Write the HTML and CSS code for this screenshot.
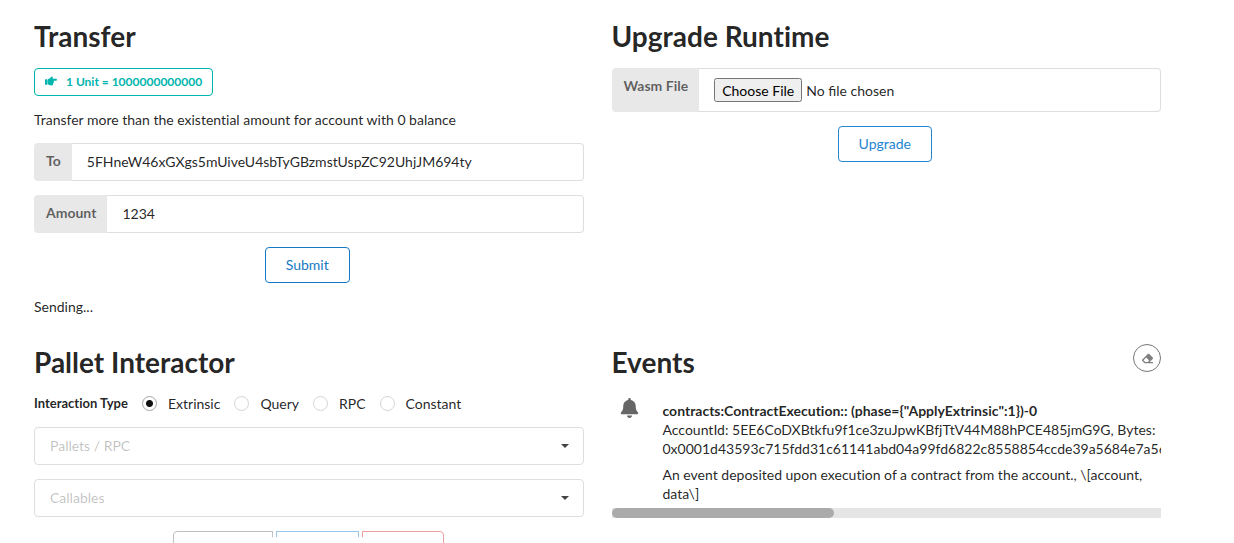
FILE: index.html
```html
<!DOCTYPE html>
<html lang="en">
<head>
<meta charset="utf-8">
<title>Substrate Front End</title>
<link rel="stylesheet" href="styles.css">
</head>
<body>
<main class="container">
  <div class="grid">
    <section class="column">
      <h1>Transfer</h1>
      <div class="tag">
        <svg class="tag-icon" viewBox="0 0 512 512" aria-hidden="true"><path fill="currentColor" d="M512 199.652c0 23.625-20.65 43.826-44.8 43.826h-99.851c16.34 17.048 18.346 49.766-6.299 70.944 14.288 22.829 2.147 53.017-16.45 62.315C353.574 425.878 322.654 448 272 448c-2.746 0-13.276-.203-16-.195-61.971.168-76.894-31.065-123.731-38.315C120.596 407.683 112 397.599 112 385.786V214.261l.002-.001c.011-18.366 10.607-35.889 28.464-43.845 28.886-12.994 95.413-49.038 107.534-77.323 7.797-18.194 21.384-29.084 40-29.092 34.222-.014 57.752 35.098 44.119 66.908-3.583 8.359-8.312 16.67-14.153 24.918H467.2c23.45 0 44.8 20.543 44.8 43.826zM96 200v192c0 13.255-10.745 24-24 24H24c-13.255 0-24-10.745-24-24V200c0-13.255 10.745-24 24-24h48c13.255 0 24 10.745 24 24z"/></svg>
        <span>1 Unit = 1000000000000</span>
      </div>
      <p>Transfer more than the existential amount for account with 0 balance</p>
      <div class="field">
        <label for="to">To</label>
        <input id="to" type="text" value="5FHneW46xGXgs5mUiveU4sbTyGBzmstUspZC92UhjJM694ty">
      </div>
      <div class="field">
        <label for="amount">Amount</label>
        <input id="amount" type="text" value="1234">
      </div>
      <div class="actions"><button class="button submit" type="button">Submit</button></div>
      <p>Sending...</p>
    </section>

    <section class="column">
      <h1>Upgrade Runtime</h1>
      <div class="field">
        <label for="wasm">Wasm File</label>
        <input id="wasm" type="file">
      </div>
      <div class="actions"><button class="button" type="button">Upgrade</button></div>
    </section>

    <section class="column">
      <h1>Pallet Interactor</h1>
      <div class="radios" role="radiogroup" aria-labelledby="interaction-type">
        <span class="radios-title" id="interaction-type">Interaction Type</span>
        <label class="radio"><input type="radio" name="type" checked>Extrinsic</label>
        <label class="radio"><input type="radio" name="type">Query</label>
        <label class="radio"><input type="radio" name="type">RPC</label>
        <label class="radio"><input type="radio" name="type">Constant</label>
      </div>
      <div class="dropdown">
        <select aria-label="Pallets / RPC"><option>Pallets / RPC</option></select>
        <svg class="caret" viewBox="0 0 8 4" aria-hidden="true"><path d="M0 0h8L4 4z"/></svg>
      </div>
      <div class="dropdown">
        <select aria-label="Callables"><option>Callables</option></select>
        <svg class="caret" viewBox="0 0 8 4" aria-hidden="true"><path d="M0 0h8L4 4z"/></svg>
      </div>
      <div class="choices">
        <button class="button choice unsigned" type="button" disabled>Unsigned</button>
        <span class="or"><span class="or-text">or</span></span>
        <button class="button choice signed" type="button" disabled>Signed</button>
        <span class="or"><span class="or-text">or</span></span>
        <button class="button choice sudo" type="button" disabled>SUDO</button>
      </div>
    </section>

    <section class="column">
      <div class="events-head">
        <h1>Events</h1>
        <button class="clear" type="button" aria-label="Clear events">
          <svg viewBox="0 0 512 512" aria-hidden="true"><path fill="currentColor" d="M497.941 273.941c18.745-18.745 18.745-49.137 0-67.882l-160-160c-18.745-18.745-49.136-18.746-67.883 0l-256 256c-18.745 18.745-18.745 49.137 0 67.882l96 96A48.004 48.004 0 0 0 144 480h356c6.627 0 12-5.373 12-12v-40c0-6.627-5.373-12-12-12H355.883l142.058-142.059zm-302.627-62.627l137.373 137.373L265.373 416H150.628l-80-80 124.686-124.686z"/></svg>
        </button>
      </div>
      <div>
        <div class="feed" tabindex="0">
          <article class="event">
            <svg class="bell" viewBox="0 0 448 512" aria-hidden="true"><path fill="currentColor" d="M224 512c35.320 0 63.970-28.650 63.970-64H160.030c0 35.350 28.650 64 63.970 64zm215.390-149.710c-19.320-20.760-55.470-51.990-55.470-154.290 0-77.700-54.480-139.900-127.940-155.160V32c0-17.670-14.320-32-31.980-32s-31.980 14.330-31.980 32v20.840C118.560 68.100 64.080 130.300 64.080 208c0 102.300-36.150 133.530-55.470 154.290-6 6.450-8.660 14.160-8.610 21.710.11 16.400 12.980 32 32.100 32h383.800c19.120 0 32-15.600 32.100-32 .05-7.550-2.610-15.270-8.610-21.710z"/></svg>
            <div class="event-body">
              <div class="summary">contracts:ContractExecution:: (phase={"ApplyExtrinsic":1})-0</div>
              <div>AccountId: 5EE6CoDXBtkfu9f1ce3zuJpwKBfjTtV44M88hPCE485jmG9G, Bytes: 0x0001d43593c715fdd31c61141abd04a99fd6822c8558854ccde39a5684e7a56da27d0001d43593c715fdd31c61141abd04a99fd6822c8558854ccde39a5684e7a56da27d00e40b5402000000000000000000</div>
              <div class="extra">An event deposited upon execution of a contract from the account., \[account, data\]</div>
            </div>
          </article>
        </div>
        <div class="scroll-track" aria-hidden="true"><div class="scroll-thumb"></div></div>
      </div>
    </section>
  </div>
</main>
</body>
</html>
```
FILE: styles.css
```css
* { box-sizing: border-box; }

body {
  margin: 0;
  height: 100vh;
  overflow: hidden;
  background: #fff;
  color: rgba(0, 0, 0, 0.87);
  font: 14px/19px Lato, "Liberation Sans", sans-serif;
  font-variant-ligatures: none;
}

.container { padding: 18px 73px 0 34px; }

.grid {
  display: grid;
  grid-template-columns: repeat(2, minmax(0, 1fr));
  gap: 28px;
}

.column {
  display: flex;
  flex-direction: column;
  gap: 14px;
}

h1 {
  margin: 0;
  font-size: 28px;
  line-height: 36px;
  font-weight: 700;
}

p { margin: 0; }

button, input, select {
  font: inherit;
  font-variant-ligatures: inherit;
  color: inherit;
}

.tag {
  align-self: flex-start;
  display: flex;
  align-items: center;
  gap: 9px;
  height: 28px;
  padding: 0 10px 2px;
  border: 1px solid #00b5ad;
  border-radius: 4px;
  color: #00b5ad;
  font-size: 12px;
  font-weight: 700;
}

.tag-icon { width: 12px; height: 12px; }

.field { display: flex; }

.field label {
  padding: 8px 11px 10px 12px;
  border-radius: 4px 0 0 4px;
  background: #e8e8e8;
  color: rgba(0, 0, 0, 0.6);
  font-weight: 700;
}

.field input {
  flex: 1;
  min-width: 0;
  padding: 8px 15px 10px;
  border: 1px solid #dededf;
  border-left: 0;
  border-radius: 0 4px 4px 0;
  background: #fff;
  line-height: 18px;
}

.field input[type="text"] { height: 38px; }

.field input[type="file"] {
  height: 44px;
  padding: 9px 15px;
  font-variant-ligatures: normal;
}

.field input::file-selector-button {
  height: 24px;
  font: inherit;
}

.actions, .choices {
  display: flex;
  justify-content: center;
}

.actions { padding-right: 3px; }

.button {
  height: 36px;
  padding: 0 20px 2px;
  border: 1px solid #2185d0;
  border-radius: 4px;
  background: transparent;
  color: #2185d0;
}

.submit { border-color: #1678c2; color: #1678c2; }

.radios {
  display: flex;
  align-items: center;
  gap: 14px;
  height: 19px;
}

.radios-title { font-size: 13px; font-weight: 700; }

.radio {
  display: flex;
  align-items: center;
  gap: 11px;
}

.radio input {
  appearance: none;
  width: 15px;
  height: 15px;
  margin: 0;
  border: 1px solid #d4d4d5;
  border-radius: 50%;
  background: #fff;
}

.radio input:checked {
  border-color: #a5a5a6;
  background: radial-gradient(circle, #111 3px, #fff 4px);
}

.dropdown { position: relative; }

.dropdown select {
  appearance: none;
  display: block;
  width: 100%;
  height: 38px;
  padding: 0 15px 2px;
  border: 1px solid #dededf;
  border-radius: 4px;
  background: #fff;
  color: rgba(0, 0, 0, 0.25);
}

.caret {
  position: absolute;
  top: 17px;
  right: 15px;
  width: 8px;
  height: 4px;
  fill: #444;
  pointer-events: none;
}

.choice:disabled { opacity: 0.45; }
.unsigned { border-color: #767676; border-radius: 4px 0 0 4px; color: #767676; }
.signed { border-radius: 0; }
.sudo { border-color: #db2828; border-radius: 0 4px 4px 0; color: #db2828; }

.or {
  position: relative;
  z-index: 1;
  width: 3px;
  height: 36px;
}

.or-text {
  position: absolute;
  top: 6px;
  left: -11px;
  width: 25px;
  height: 25px;
  border-radius: 50%;
  background: #fff;
  font-size: 12px;
  font-weight: 700;
  line-height: 25px;
  text-align: center;
}

.events-head {
  display: flex;
  justify-content: space-between;
  align-items: flex-start;
}

.clear {
  display: grid;
  place-items: center;
  width: 28px;
  height: 28px;
  padding: 0;
  border: 1px solid #767676;
  border-radius: 50%;
  background: #fff;
  color: #808080;
}

.clear svg { width: 11px; height: 11px; }

.feed {
  overflow-x: auto;
  overflow-y: hidden;
  scrollbar-width: none;
}

.scroll-track {
  height: 10px;
  background: #e5e5e5;
}

.scroll-thumb {
  width: 222px;
  height: 10px;
  border-radius: 5px;
  background: #ababab;
}

.event {
  display: flex;
  gap: 16px;
  padding: 4px 0;
}

.bell {
  flex: none;
  width: 35px;
  height: 20px;
  color: #666;
}

.event-body {
  flex: 1;
  min-width: 0;
  padding: 3px 0 1px;
}

.summary { font-weight: 700; }
.extra { margin-top: 7px; }
```
